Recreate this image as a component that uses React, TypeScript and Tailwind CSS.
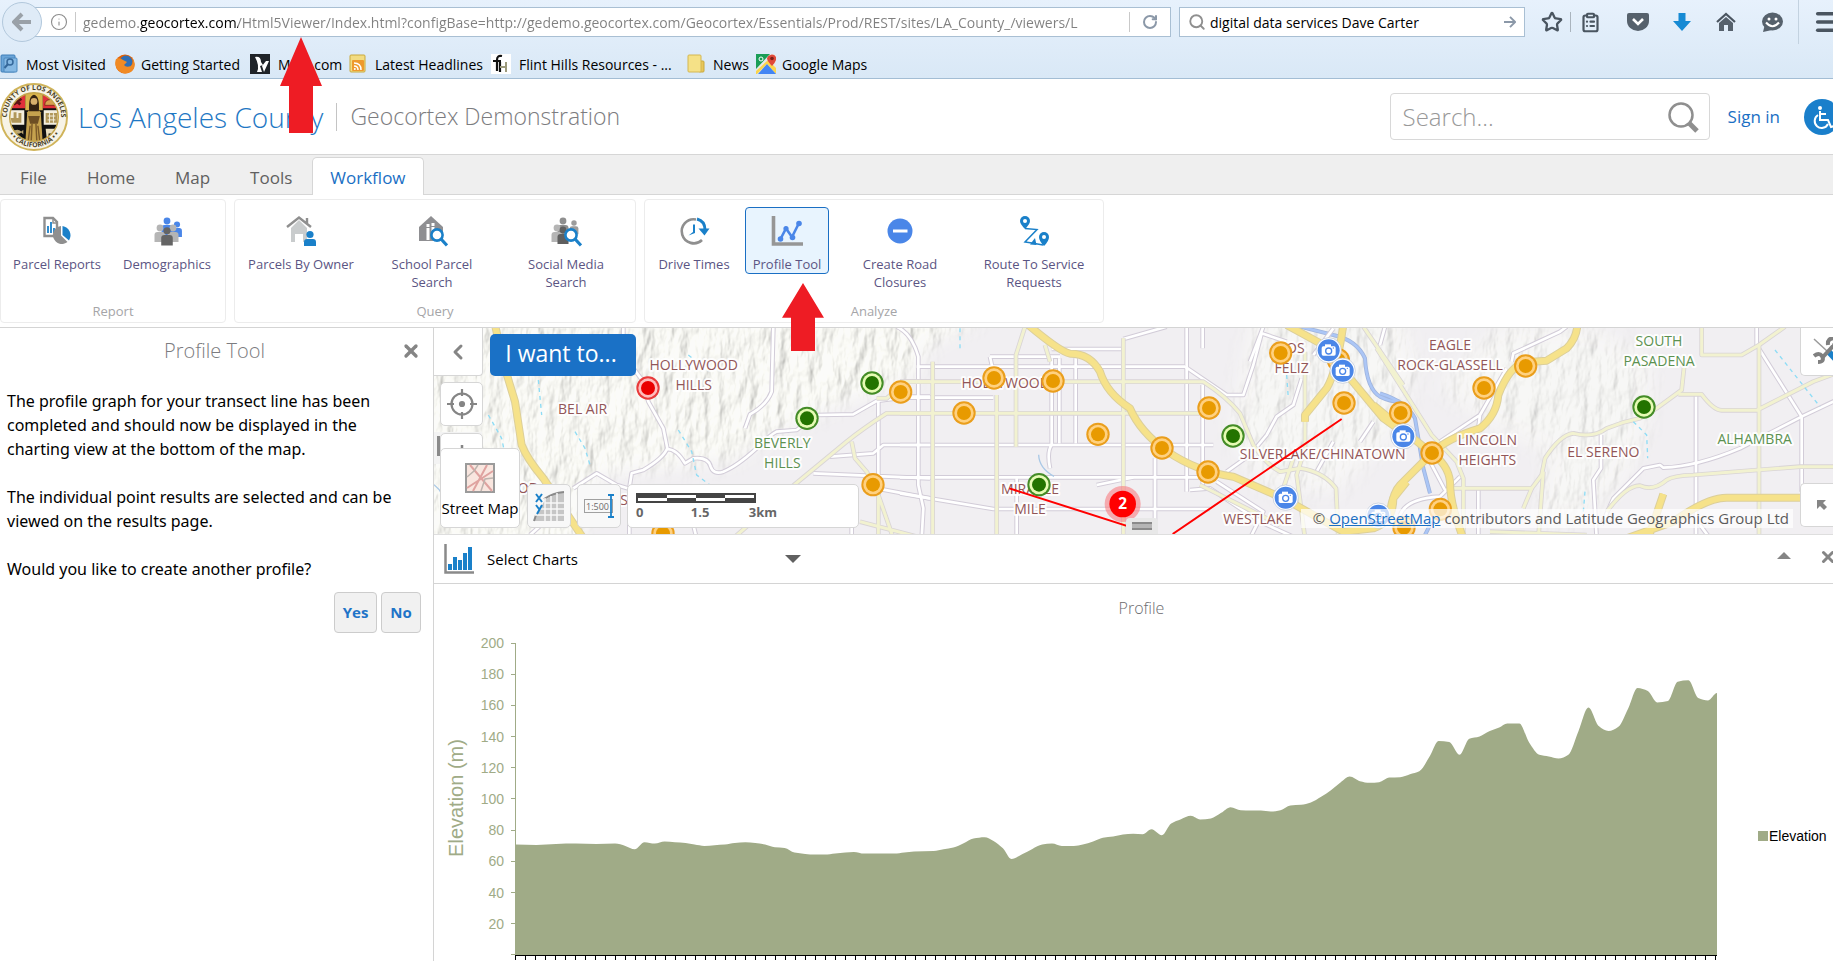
import { useState } from "react";
import type { ReactNode } from "react";
import clsx from "clsx";
import {
  ChevronLeft,
  ClipboardList,
  Info,
  Menu,
  RotateCw,
  Search,
  Star,
  X,
} from "lucide-react";

type Road = { tile: number; kind: "local" | "minor" | "major" | "river"; d: string };
type Pin = { tile: number; kind: "orange" | "green" | "red" | "camera"; x: number; y: number };
type MapLabel = { tile: number; x: number; y: number; text: string; city?: boolean };

const tileOffset = ["translate(-12 -9)", "translate(1398 -9)", "translate(2838 -9)"];

const roads: Road[] = [
  { tile: 1, kind: "river", d: "M1200 5 L1300 30 Q1370 45 1395 100 Q1400 190 1440 215 Q1470 230 1500 230" },
  { tile: 2, kind: "river", d: "M0 205 Q80 230 105 280 L130 430 L150 505 M155 590 L130 640" },
  { tile: 0, kind: "local", d: "M1030 5 L1025 200 Q1010 240 960 268 L945 310" },
  { tile: 0, kind: "local", d: "M580 5 V90 L640 170 L655 230 L700 310 L712 370 Q700 400 640 435 L605 445 L598 490 V640" },
  { tile: 0, kind: "local", d: "M710 372 Q740 372 765 415 L790 400 Q835 395 842 425 Q850 450 880 440 Q920 425 980 370 Q1020 330 1040 320 L1100 315 L1160 270 L1270 268 L1340 228 L1440 215 H1500" },
  { tile: 0, kind: "local", d: "M430 490 L500 445 L560 480 L600 492 H700 M300 630 L400 540 M790 600 L800 640" },
  { tile: 0, kind: "local", d: "M1345 225 V510 M1200 395 L1330 385 L1360 360 H1500 M1150 445 L1500 460 M1340 490 L1500 520 M1265 600 V640" },
  { tile: 0, kind: "local", d: "M1400 5 Q1445 25 1465 95 V480 L1480 550 L1475 640" },
  { tile: 1, kind: "local", d: "M50 125 H855 M455 72 H670 M270 95 H450 L480 95 M670 42 L800 5 M860 5 V500 M908 5 V70 M908 180 V480" },
  { tile: 1, kind: "local", d: "M0 360 H940 M0 457 H900 M0 505 L280 552 H930 M455 100 V360 Q440 380 450 430 M478 100 V355 M527 100 V355" },
  { tile: 1, kind: "local", d: "M765 400 V640 M350 460 V640 M0 218 H280 M270 95 L282 150 M590 480 L700 457" },
  { tile: 1, kind: "local", d: "M855 125 L980 210 H1030 L1060 120 L1085 25 L1160 50 M1090 5 L1050 110" },
  { tile: 1, kind: "local", d: "M1205 160 L1180 240 L1130 275 L1100 330 L1050 390 L980 440 M870 495 L930 490 L1080 590 L1190 640" },
  { tile: 1, kind: "local", d: "M1420 290 L1380 350 M1300 350 L1250 440 M950 470 L1090 560 L1050 640 M1300 10 L1240 90" },
  { tile: 2, kind: "local", d: "M15 5 L0 60 M395 110 L400 85 L540 20 L560 5 M180 350 L300 270 L380 130 M300 270 L295 310" },
  { tile: 2, kind: "local", d: "M663 330 V430 L640 465 L650 640 M1130 5 V60 L1265 275 V500 M948 210 V640" },
  { tile: 2, kind: "local", d: "M1380 220 L1265 275 L1080 370 Q950 425 850 428 L840 420 L790 430 L700 520 L665 600" },
  { tile: 2, kind: "local", d: "M295 490 V640 M150 410 L195 495 M60 570 Q80 520 180 515 L240 455 M960 600 L990 640" },
  { tile: 0, kind: "minor", d: "M1500 265 H1370 Q1300 310 1250 350 L1080 490 L910 640" },
  { tile: 0, kind: "minor", d: "M1265 350 L1275 400 L1310 440 L1345 510 L1390 640 M1290 590 L1480 640 M1345 510 V640" },
  { tile: 0, kind: "minor", d: "M1340 220 H1370 L1430 170 H1500" },
  { tile: 1, kind: "minor", d: "M0 170 H910 Q980 215 1020 265 L1060 360 Q1100 420 1140 440 L1200 430 Q1270 440 1308 490 L1315 640" },
  { tile: 1, kind: "minor", d: "M0 265 H910 M98 110 V640 M290 210 V640 M348 365 V90 L375 5 M670 40 V640 M435 60 L450 110" },
  { tile: 1, kind: "minor", d: "M1215 80 V370 L1190 450 L1215 640 M1180 400 L1150 490 M1390 5 L1510 180 M900 480 L1140 600" },
  { tile: 2, kind: "minor", d: "M-10 70 L130 290 L155 330 L230 410 L250 460 V640" },
  { tile: 2, kind: "minor", d: "M220 490 H455 L485 450 L495 400 Q540 330 580 325 Q640 340 680 310 Q730 290 780 280 L830 250 L905 195 L915 100" },
  { tile: 2, kind: "minor", d: "M490 440 L475 640 M455 490 L430 550 M965 5 V90 H1085 L1137 60 L1215 5" },
  { tile: 2, kind: "minor", d: "M895 208 H965 Q1000 255 1025 256 H1130 L1300 170 L1380 140 M1137 60 V640" },
  { tile: 2, kind: "minor", d: "M680 560 Q740 480 780 482 Q820 500 860 465 Q880 452 940 450 L1260 425 H1380 M330 620 L620 630" },
  { tile: 0, kind: "major", d: "M195 0 L225 130 L255 230 L275 360 Q290 400 340 460 L460 640" },
  { tile: 1, kind: "major", d: "M385 0 Q480 80 510 86 Q570 85 600 140 Q620 205 690 250 Q720 320 800 378 Q890 440 1000 455 L1150 520 L1330 620 L1420 610 Q1480 590 1480 520 L1520 470" },
  { tile: 1, kind: "major", d: "M1160 0 L1270 60 L1350 160 L1450 280 L1520 330 M1330 0 Q1310 140 1280 190 L1215 270 V290" },
  { tile: 2, kind: "major", d: "M-20 240 L100 340 L155 385 Q205 420 210 470 Q210 540 250 640" },
  { tile: 2, kind: "major", d: "M155 385 Q200 340 300 310 Q350 270 355 210 Q390 120 437 112 L500 107 L560 70 Q590 40 592 0" },
  { tile: 2, kind: "major", d: "M155 385 L60 480 Q40 500 30 560 M850 507 L805 640 M740 640 L880 590 Q980 518 1040 518 H1260" },
];

const roadStyle = {
  river: { casing: "#9fb4dd", width: 12, fill: "#abc6f6", inner: 7 },
  local: { casing: "#d2ccd8", width: 14, fill: "#ffffff", inner: 8 },
  minor: { casing: "#d9d4d6", width: 14, fill: "#f2f2d0", inner: 9 },
  major: { casing: "#dccf9a", width: 24, fill: "#f6e28a", inner: 18 },
};

const streams = [
  { tile: 0, d: "M325 165 L335 270 M175 270 L215 340 L240 460 M435 320 L465 370 L480 420 M745 315 L785 380 L800 450 L840 480 M775 90 L800 110" },
  { tile: 1, d: "M180 10 V70 M1160 150 L1165 220" },
  { tile: 2, d: "M760 290 L800 330 L803 400 M615 500 L610 560 M1185 75 L1320 245" },
];

const pins: Pin[] = [
  { tile: 0, kind: "red", x: 654, y: 189 },
  { tile: 0, kind: "green", x: 1326, y: 174 },
  { tile: 0, kind: "green", x: 1131, y: 280 },
  { tile: 0, kind: "orange", x: 1412, y: 201 },
  { tile: 0, kind: "orange", x: 1329, y: 479 },
  { tile: 0, kind: "orange", x: 699, y: 625 },
  { tile: 1, kind: "orange", x: 282, y: 159 },
  { tile: 1, kind: "orange", x: 459, y: 168 },
  { tile: 1, kind: "orange", x: 192, y: 264 },
  { tile: 1, kind: "orange", x: 594, y: 328 },
  { tile: 1, kind: "orange", x: 786, y: 369 },
  { tile: 1, kind: "orange", x: 927, y: 249 },
  { tile: 1, kind: "orange", x: 924, y: 441 },
  { tile: 1, kind: "orange", x: 1142, y: 84 },
  { tile: 1, kind: "orange", x: 1315, y: 105 },
  { tile: 1, kind: "orange", x: 1332, y: 234 },
  { tile: 1, kind: "green", x: 417, y: 479 },
  { tile: 1, kind: "green", x: 999, y: 333 },
  { tile: 1, kind: "camera", x: 1286, y: 76 },
  { tile: 1, kind: "camera", x: 1328, y: 137 },
  { tile: 1, kind: "camera", x: 1157, y: 518 },
  { tile: 1, kind: "camera", x: 1435, y: 572 },
  { tile: 2, kind: "orange", x: 62, y: 264 },
  { tile: 2, kind: "camera", x: 70, y: 334 },
  { tile: 2, kind: "orange", x: 156, y: 384 },
  { tile: 2, kind: "orange", x: 312, y: 189 },
  { tile: 2, kind: "orange", x: 437, y: 123 },
  { tile: 2, kind: "orange", x: 181, y: 553 },
  { tile: 2, kind: "orange", x: 72, y: 608 },
  { tile: 2, kind: "green", x: 792, y: 246 },
];

const pinColors = {
  orange: ["#ea9e1c", "#ffd180", "#e89a00"],
  green: ["#448c27", "#e6fbb4", "#237300"],
  red: ["#e83a3a", "#ffbcbc", "#ea0000"],
};

const mapLabels: MapLabel[] = [
  { tile: 0, x: 458, y: 267, text: "BEL AIR" },
  { tile: 0, x: 791, y: 136, text: "HOLLYWOOD" },
  { tile: 0, x: 791, y: 196, text: "HILLS" },
  { tile: 0, x: 1057, y: 369, text: "BEVERLY", city: true },
  { tile: 0, x: 1057, y: 429, text: "HILLS", city: true },
  { tile: 0, x: 295, y: 504, text: "OD" },
  { tile: 0, x: 582, y: 540, text: "S" },
  { tile: 1, x: 317, y: 190, text: "HOLLYWOOD" },
  { tile: 1, x: 1175, y: 84, text: "LOS" },
  { tile: 1, x: 1175, y: 144, text: "FELIZ" },
  { tile: 1, x: 1268, y: 402, text: "SILVERLAKE/CHINATOWN" },
  { tile: 1, x: 390, y: 507, text: "MIRACLE" },
  { tile: 1, x: 390, y: 567, text: "MILE" },
  { tile: 1, x: 1073, y: 597, text: "WESTLAKE" },
  { tile: 2, x: 210, y: 76, text: "EAGLE" },
  { tile: 2, x: 210, y: 136, text: "ROCK-GLASSELL" },
  { tile: 2, x: 322, y: 360, text: "LINCOLN" },
  { tile: 2, x: 322, y: 420, text: "HEIGHTS" },
  { tile: 2, x: 670, y: 395, text: "EL SERENO" },
  { tile: 2, x: 837, y: 62, text: "SOUTH", city: true },
  { tile: 2, x: 837, y: 122, text: "PASADENA", city: true },
  { tile: 2, x: 1124, y: 357, text: "ALHAMBRA", city: true },
];

// Samples along the transect: [distance, height above the axis], both in plot units
const profile: [number, number][] = [
  [0, 331], [46, 330], [90, 333], [134, 334], [180, 333], [222, 334], [245, 327], [266, 317],
  [288, 338], [311, 334], [333, 340], [356, 338], [380, 336], [400, 331], [422, 327], [445, 329],
  [468, 331], [490, 336], [514, 338], [536, 336], [558, 331], [580, 323], [602, 321], [624, 307],
  [648, 303], [670, 301], [692, 301], [715, 304], [738, 307], [757, 309], [780, 304], [848, 304],
  [870, 307], [892, 310], [936, 312], [958, 317], [980, 322], [1003, 335], [1025, 349], [1050, 353],
  [1070, 342], [1091, 320], [1110, 288], [1134, 302], [1157, 318], [1179, 331], [1201, 334],
  [1223, 327], [1250, 327], [1270, 331], [1293, 340], [1315, 351], [1338, 355], [1360, 361],
  [1383, 363], [1404, 362], [1424, 377], [1447, 359], [1468, 394], [1490, 407], [1512, 417],
  [1533, 406], [1557, 409], [1580, 426], [1601, 443], [1624, 434], [1647, 433], [1669, 433],
  [1691, 430], [1713, 434], [1735, 448], [1759, 450], [1781, 457], [1804, 474], [1826, 494],
  [1848, 518], [1868, 535], [1891, 521], [1913, 516], [1934, 518], [1957, 532], [1981, 533],
  [2003, 542], [2024, 551], [2048, 597], [2067, 641], [2091, 638], [2114, 600], [2136, 648],
  [2159, 655], [2182, 671], [2203, 682], [2221, 694], [2248, 694], [2270, 637], [2293, 600],
  [2314, 595], [2336, 589], [2358, 600], [2381, 672], [2403, 742], [2426, 686], [2448, 671],
  [2470, 684], [2492, 739], [2513, 800], [2536, 791], [2557, 757], [2581, 761], [2603, 819],
  [2627, 823], [2649, 770], [2671, 763], [2691, 785],
];

const PLOT_W = 2691;
const PLOT_H = 935;

// Monotone-style smoothing so that peaks do not overshoot the samples
const areaPath = () => {
  const slope = profile.map((p, i) => {
    const prev = profile[i - 1];
    const next = profile[i + 1];
    if (!prev || !next) return 0;
    const a = (p[1] - prev[1]) / (p[0] - prev[0]);
    const b = (next[1] - p[1]) / (next[0] - p[0]);
    return a * b <= 0 ? 0 : (2 * a * b) / (a + b);
  });
  let d = `M0 ${PLOT_H} L0 ${PLOT_H - profile[0][1]}`;
  for (let i = 1; i < profile.length; i++) {
    const [x0, y0] = profile[i - 1];
    const [x1, y1] = profile[i];
    const h = (x1 - x0) / 3;
    d += ` C${x0 + h} ${PLOT_H - y0 - slope[i - 1] * h} ${x1 - h} ${PLOT_H - y1 + slope[i] * h} ${x1} ${PLOT_H - y1}`;
  }
  return `${d} L${PLOT_W} ${PLOT_H} Z`;
};

const Person = ({ x, y, s = 1, color }: { x: number; y: number; s?: number; color: string }) => (
  <g transform={`translate(${x} ${y}) scale(${s})`} fill={color}>
    <circle cx="0" cy="-5" r="3.4" />
    <path d="M-5.5 9V2Q-5.5-1 -2.5-1H2.5Q5.5-1 5.5 2V9Z" />
  </g>
);

const Magnifier = () => (
  <g fill="none" stroke="#1a80c9" strokeWidth="2.6">
    <circle cx="21" cy="20" r="5.6" fill="#fff" />
    <path d="M25 24L31 30.500" strokeWidth="3.200" />
  </g>
);

const RibbonIcon = ({ children }: { children: ReactNode }) => (
  <svg viewBox="0 0 32 32" className="h-8 w-8" aria-hidden="true">
    {children}
  </svg>
);

const icons: Record<string, ReactNode> = {
  report: (
    <RibbonIcon>
      <path d="M3.500 3H12L16 7V21H3.500Z" fill="#fff" stroke="#8f8f8f" strokeWidth="2.4" />
      <path d="M12 3V8H16" fill="none" stroke="#8f8f8f" strokeWidth="1.500" />
      <path d="M7 18V11M10 18V7M13 18V13" stroke="#1a80c9" strokeWidth="1.800" />
      <path d="M20 11A9 9 0 1 0 26.500 27L20 20.500Z" fill="#8f8f8f" />
      <path d="M21.500 11A9.500 9.500 0 0 1 28 25.500L21.500 20Z" fill="#1a80c9" />
    </RibbonIcon>
  ),
  people: (
    <RibbonIcon>
      <Person x={16} y={11} color="#4a86e8" />
      <Person x={26} y={14} s={0.9} color="#4a86e8" />
      <Person x={9} y={18} color="#b5b5b5" />
      <Person x={22} y={18} color="#b5b5b5" />
      <Person x={16} y={21} s={1.05} color="#646464" />
    </RibbonIcon>
  ),
  house: (
    <RibbonIcon>
      <path d="M6 13L14 5L22 13V27H18V19H10V27H6Z" fill="#c9cccd" />
      <path d="M2 12L14 2.500L26 12M22 3V8" fill="none" stroke="#8f8f8f" strokeWidth="2.400" />
      <circle cx="25" cy="19.500" r="3.600" fill="#1a80c9" />
      <path d="M19 31V27Q19 24 22 24H28Q31 24 31 27V31H28V28V31H22V28V31Z" fill="#1a80c9" />
    </RibbonIcon>
  ),
  school: (
    <RibbonIcon>
      <path d="M3 12L15 1L27 12V26H3Z" fill="#8f8f92" />
      <path d="M12 9V25M17 8V18" stroke="#fff" strokeWidth="3" strokeDasharray="3 1 12 2" />
      <Magnifier />
    </RibbonIcon>
  ),
  social: (
    <RibbonIcon>
      <Person x={13} y={11} color="#8f8f8f" />
      <Person x={24} y={12} s={0.8} color="#9c9c9c" />
      <Person x={7} y={18} color="#b5b5b5" />
      <Person x={13} y={20} color="#5f5f5f" />
      <Magnifier />
    </RibbonIcon>
  ),
  clock: (
    <RibbonIcon>
      <path d="M24 25A12 12 0 1 1 18 4.500" fill="none" stroke="#8f8f8f" strokeWidth="2.600" />
      <path d="M15 9.500V17L10.500 20.500L17 18V9.500Z" fill="#1a80c9" />
      <path d="M19 4Q27 6 27 15" fill="none" stroke="#1a80c9" strokeWidth="3" />
      <path d="M20.500 13.500H31.500L26.500 20.500Z" fill="#1a80c9" />
    </RibbonIcon>
  ),
  graph: (
    <RibbonIcon>
      <path d="M2.500 1V29H32" fill="none" stroke="#969696" strokeWidth="3.600" />
      <path d="M10 23L15 13.500L21 22L27.500 9" fill="none" stroke="#4a86e8" strokeWidth="2.600" />
      <g fill="#4a86e8">
        <circle cx="9.500" cy="24" r="2.800" />
        <circle cx="15" cy="13.500" r="2.600" />
        <circle cx="21.500" cy="22.500" r="2.800" />
        <circle cx="28" cy="8.500" r="2.800" />
      </g>
    </RibbonIcon>
  ),
  minus: (
    <RibbonIcon>
      <circle cx="16" cy="16" r="12.500" fill="#4a86e8" />
      <path d="M9 16H23.500" stroke="#fff" strokeWidth="3" />
    </RibbonIcon>
  ),
  route: (
    <RibbonIcon>
      <g fill="#1a80c9">
        <path d="M7 14Q2 9 2 6A5 5 0 0 1 12 6Q12 9 7 14Z" />
        <path d="M26 31Q21 26 21 22A5 5 0 0 1 31 22Q31 26 26 31Z" />
        <path d="M12 29.500L17 23L18.500 30Z" />
      </g>
      <circle cx="7" cy="6" r="2" fill="#fff" />
      <circle cx="26" cy="22" r="2" fill="#fff" />
      <path d="M7 13.500L19 14.500L7 27L14 28L25 30" fill="none" stroke="#1a80c9" strokeWidth="1.500" />
    </RibbonIcon>
  ),
};

type Tool = { label: string; icon: string; width: string };

const ribbonGroups: { name: string; tools: Tool[] }[] = [
  {
    name: "Report",
    tools: [
      { label: "Parcel Reports", icon: "report", width: "w-25" },
      { label: "Demographics", icon: "people", width: "w-26" },
    ],
  },
  {
    name: "Query",
    tools: [
      { label: "Parcels By Owner", icon: "house", width: "w-30" },
      { label: "School Parcel Search", icon: "school", width: "w-[126px] px-3" },
      { label: "Social Media Search", icon: "social", width: "w-[126px] px-4" },
    ],
  },
  {
    name: "Analyze",
    tools: [
      { label: "Drive Times", icon: "clock", width: "w-[86px]" },
      { label: "Profile Tool", icon: "graph", width: "w-21" },
      { label: "Create Road Closures", icon: "minus", width: "w-[126px] px-4" },
      { label: "Route To Service Requests", icon: "route", width: "w-[126px] px-2" },
    ],
  },
];

const RedArrow = ({ className }: { className: string }) => (
  <svg viewBox="0 0 42 96" preserveAspectRatio="none" className={clsx("pointer-events-none absolute z-20 w-[42px]", className)} aria-hidden="true">
    <path d="M21 0L42 49H33V96H9V49H0Z" fill="#ee1c24" />
  </svg>
);

const BrowserChrome = () => (
  <header className="border-b border-[#a3bdd4] bg-linear-to-b from-[#e7f1fc] to-[#d9e8f6] text-[14px] text-black">
    <div className="flex h-11 items-center">
      <button aria-label="Back" className="z-10 ml-[2px] flex size-10 shrink-0 items-center justify-center rounded-full border border-[#b2c8dc] bg-[#dfebf7]">
        <svg viewBox="0 0 20 20" className="size-5" aria-hidden="true">
          <path d="M10 2L2 10L10 18M3 10H19" fill="none" stroke="#9aa1a8" strokeWidth="4" />
        </svg>
      </button>
      <div className="-ml-5 flex h-[30px] min-w-0 flex-1 items-center border border-[#a9bfd3] bg-white pl-[27px]">
        <Info className="size-[18px] shrink-0 text-[#8d8d8d]" strokeWidth={1.5} />
        <span className="mx-[7px] h-5 w-px bg-[#c9c9c9]" />
        <input
          aria-label="Address"
          readOnly
          value="gedemo.geocortex.com/Html5Viewer/Index.html?configBase=http://gedemo.geocortex.com/Geocortex/Essentials/Prod/REST/sites/LA_County_/viewers/L"
          className="mr-8 min-w-0 flex-1 bg-[linear-gradient(to_right,#808080_57px,#000_57px,#000_155px,#808080_155px)] bg-clip-text text-transparent outline-none"
        />
        <span className="h-5 w-px bg-[#c9c9c9]" />
        <button aria-label="Reload" className="flex w-10 justify-center text-[#8b98a8]">
          <RotateCw className="size-4" strokeWidth={3} />
        </button>
      </div>
      <div className="ml-2 flex h-[30px] w-[346px] shrink-0 items-center border border-[#a9bfd3] bg-white px-2">
        <Search className="size-[18px] shrink-0 text-[#8f8f8f]" strokeWidth={2.5} />
        <input aria-label="Web search" defaultValue="digital data services Dave Carter" className="ml-1 min-w-0 flex-1 outline-none" />
        <svg viewBox="0 0 14 14" className="size-3" aria-hidden="true">
          <path d="M0 7H12M7 1L13 7L7 13" fill="none" stroke="#8b98a8" strokeWidth="2.200" />
        </svg>
      </div>
      <div className="flex h-full shrink-0 items-center text-[#4a5560]">
        <button aria-label="Bookmark" className="ml-4">
          <Star className="size-[22px]" strokeWidth={2.5} />
        </button>
        <span className="mx-[7px] h-5 w-px bg-[#aab4be]" />
        <button aria-label="Bookmarks list" className="flex w-6 justify-center">
          <ClipboardList className="size-[21px]" strokeWidth={2.5} />
        </button>
        <button aria-label="Pocket" className="ml-6 flex w-6 justify-center">
          <svg viewBox="0 0 22 20" className="h-5 w-[22px]" aria-hidden="true">
            <path d="M2 1H20Q22 1 22 3V9A11 10 0 0 1 0 9V3Q0 1 2 1Z" fill="#56616c" />
            <path d="M6 7L11 12L16 7" fill="none" stroke="#fff" strokeWidth="2.600" />
          </svg>
        </button>
        <button aria-label="Downloads" className="ml-5 flex w-6 justify-center">
          <svg viewBox="0 0 18 18" className="size-[18px]" aria-hidden="true">
            <path d="M5.500 0H12.500V8H18L9 18L0 8H5.500Z" fill="#168ad4" />
          </svg>
        </button>
        <button aria-label="Home" className="ml-5 flex w-6 justify-center">
          <svg viewBox="0 0 20 20" className="size-5" aria-hidden="true">
            <path d="M1 10L10 2L19 10" fill="none" stroke="#4a5560" strokeWidth="2.200" />
            <path d="M10 5L17 11V19H12V13H8V19H3V11Z" fill="#56616c" />
          </svg>
        </button>
        <button aria-label="Feedback" className="ml-[22px] flex w-6 justify-center">
          <svg viewBox="0 0 22 20" className="h-5 w-[22px]" aria-hidden="true">
            <ellipse cx="11.500" cy="9.500" rx="10.500" ry="9" fill="#56616c" />
            <path d="M2 20L4 12L11 18Z" fill="#56616c" />
            <circle cx="8" cy="7" r="1.500" fill="#fff" />
            <circle cx="15" cy="7" r="1.500" fill="#fff" />
            <path d="M5 10.500Q11.500 18 18 10.500" fill="none" stroke="#fff" strokeWidth="2" />
          </svg>
        </button>
        <span className="ml-[14px] h-full w-px bg-[#c3d2e0]" />
        <button aria-label="Menu" className="-mr-2 ml-[14px]">
          <Menu className="size-7" strokeWidth={3} />
        </button>
      </div>
    </div>
    <nav className="flex h-[34px] items-center pt-[6px] whitespace-nowrap">
      <a href="#most" className="flex w-[115px] items-center gap-2">
        <svg viewBox="0 0 18 20" className="h-5 w-[18px]" aria-hidden="true">
          <rect x="1" y="1" width="14" height="17" rx="1" fill="#6ba5d8" stroke="#3f7fb8" />
          <rect x="4" y="4" width="13" height="14" rx="1" fill="#86b9e4" stroke="#4c89bf" />
          <circle cx="10" cy="8" r="3" fill="none" stroke="#35689b" strokeWidth="1.500" />
          <path d="M8 10L4.500 14" stroke="#35689b" strokeWidth="2" />
        </svg>
        Most Visited
      </a>
      <a href="#start" className="flex w-[135px] items-center gap-[6px]">
        <svg viewBox="0 0 20 20" className="size-5" aria-hidden="true">
          <circle cx="10" cy="10" r="9.500" fill="#e66000" />
          <circle cx="11" cy="8" r="6.500" fill="#2f6fb5" />
          <path d="M1 5Q5 3 8 6L12 8L9 11Q11 14 16 12Q19 9 17 3Q23 12 16 18Q8 22 2 15Q-1 10 1 5Z" fill="#f08a24" />
        </svg>
        Getting Started
      </a>
      <a href="#site" className="flex w-[99px] items-center gap-2">
        <svg viewBox="0 0 20 20" className="size-5" aria-hidden="true">
          <rect width="20" height="20" fill="#1f2328" />
          <path d="M5 3Q11 2 11 8L13 11L10 12L12 18H7Q10 12 5 3ZM14 18L12 12L16 7H19Z" fill="#fff" />
        </svg>
        Mani.com
      </a>
      <a href="#headlines" className="flex w-[142px] items-center gap-2">
        <svg viewBox="0 0 18 20" className="h-5 w-[18px]" aria-hidden="true">
          <rect x="1" y="1" width="15" height="17" rx="1" fill="#f2dc82" stroke="#c9a93c" />
          <rect x="3" y="6" width="12" height="11" rx="1" fill="#ee9a2d" />
          <path d="M5 9Q12 9 12 16M5 12Q9 12 9 16" fill="none" stroke="#fff" strokeWidth="1.500" />
          <circle cx="5.800" cy="15" r="1" fill="#fff" />
        </svg>
        Latest Headlines
      </a>
      <a href="#flint" className="flex w-[196px] items-center gap-2">
        <svg viewBox="0 0 20 20" className="size-5" aria-hidden="true">
          <rect width="20" height="20" fill="#fff" />
          <path d="M11 2Q6 1 6 6V17M2 7H10M9 8V18" fill="none" stroke="#111" strokeWidth="2.200" />
          <path d="M15 8V18M9 13H15" fill="none" stroke="#9c9a7c" strokeWidth="2" />
        </svg>
        Flint Hills Resources - ...
      </a>
      <a href="#news" className="flex w-[69px] items-center gap-2">
        <svg viewBox="0 0 18 20" className="h-5 w-[18px]" aria-hidden="true">
          <rect x="12" y="7" width="5" height="11" rx="1" fill="#e8c65a" stroke="#c9a93c" />
          <rect x="1" y="1" width="13" height="17" rx="1" fill="#f5e187" stroke="#d4b751" />
        </svg>
        News
      </a>
      <a href="#maps" className="flex items-center gap-[6px]">
        <svg viewBox="0 0 20 20" className="size-5" aria-hidden="true">
          <rect width="20" height="20" rx="1" fill="#e8e8e8" />
          <path d="M0 0H14L0 15Z" fill="#1b9e57" />
          <path d="M0 17L12 6L20 14V20L11 10L1 20H0Z" fill="#fbd54b" />
          <path d="M11 10L20 20H2Z" fill="#4285f4" />
          <path d="M16 12Q11 7 11 4A5 5 0 0 1 20 3V6Q19 9 16 12Z" fill="#e04a3a" />
          <circle cx="16" cy="4.500" r="1.800" fill="#7c1f17" />
          <circle cx="5" cy="5" r="2" fill="none" stroke="#fff" />
        </svg>
        Google Maps
      </a>
    </nav>
  </header>
);

const CountySeal = () => (
  <svg viewBox="0 0 70 70" className="size-[68px] shrink-0" aria-hidden="true">
    <defs>
      <path id="sealTop" d="M7 35A28 28 0 0 1 63 35" />
      <path id="sealBottom" d="M4 35A31 31 0 0 0 66 35" />
      <clipPath id="sealInner">
        <circle cx="35" cy="35" r="25" />
      </clipPath>
    </defs>
    <circle cx="35" cy="35" r="34" fill="#f7f3e6" stroke="#d0b45a" strokeWidth="2" />
    <g clipPath="url(#sealInner)">
      <rect width="70" height="70" fill="#111" />
      <rect x="8" y="8" width="18" height="18" fill="#e0303a" />
      <rect x="44" y="8" width="18" height="18" fill="#e0303a" />
      <rect x="8" y="28" width="17" height="15" fill="#f4efdf" />
      <rect x="45" y="28" width="17" height="15" fill="#f4efdf" />
      <path d="M12 41L11 36H14V30H17V36H19V31H22V41ZM47 41V31H59V41Z" fill="#b0975a" />
      <path d="M49 34H57M49 38H57M51 31V41M55 31V41" stroke="#f4efdf" />
      <path d="M14 22L22 16M15 17L21 22" stroke="#5c1414" strokeWidth="3" />
      <path d="M46 23Q46 17 52 17Q58 17 58 23Z" fill="#d7a050" stroke="#8c2a20" />
      <path d="M13 50Q18 46 22 50L24 48V53L22 51Q18 54 13 50Z" fill="#bda873" />
      <path d="M47 47H58L57 55H55V52H50V56H48Z" fill="#e9dfc0" />
      <path d="M26 8H44V28H26Z" fill="#d9b44c" />
      <path d="M26 63L28 30Q35 22 42 30L44 63Z" fill="#c5a24e" />
      <path d="M30 29Q29 13 35 12Q41 13 40 29Z" fill="#352312" />
      <circle cx="35" cy="19" r="3.500" fill="#d8b06c" />
      <path d="M29 34H41L39 42H31Z" fill="#6d4f24" />
      <path d="M32 62L33 42M38 62L37 42M29 60L31 44M41 60L39 44" stroke="#7b5a28" strokeWidth="1.500" />
    </g>
    <circle cx="35" cy="35" r="25" fill="none" stroke="#c4a54a" strokeWidth="1.500" />
    <g fontSize="7" fontWeight="700" fill="#4a4126" textAnchor="middle">
      <text>
        <textPath href="#sealTop" startOffset="50%">COUNTY OF LOS ANGELES</textPath>
      </text>
      <text>
        <textPath href="#sealBottom" startOffset="50%">•  •  CALIFORNIA  •  •</textPath>
      </text>
    </g>
  </svg>
);

const AppHeader = () => (
  <div className="flex h-[75px] items-center bg-white">
    <CountySeal />
    <h1 className="ml-[10px] text-[28px] font-light whitespace-nowrap text-[#1f78c4]">Los Angeles County</h1>
    <span className="mx-[13px] h-7 w-px bg-[#c4c4c4]" />
    <span className="text-[23px] font-light whitespace-nowrap text-[#7c7c80]">Geocortex Demonstration</span>
    <div className="mr-[18px] ml-auto flex h-[47px] w-[320px] items-center rounded-[4px] border border-[#d8d8d8] pr-[10px] pl-3">
      <input aria-label="Search" placeholder="Search..." className="min-w-0 flex-1 text-[24px] font-light outline-none placeholder:text-[#999]" />
      <svg viewBox="0 0 32 32" className="size-8" aria-hidden="true">
        <circle cx="14" cy="14" r="11.500" fill="none" stroke="#8f8f8f" strokeWidth="2.500" />
        <path d="M22 22L30 30" stroke="#8f8f8f" strokeWidth="5" />
      </svg>
    </div>
    <a href="#signin" className="text-[17px] whitespace-nowrap text-[#1a6fc4]">Sign in</a>
    <button aria-label="Accessibility" className="-mr-[7px] ml-6 size-9 shrink-0 rounded-full bg-[#1a7fcb]">
      <svg viewBox="0 0 36 36" className="size-9" fill="none" stroke="#fff" strokeWidth="2" aria-hidden="true">
        <circle cx="16" cy="9" r="2" fill="#fff" stroke="none" />
        <path d="M16 12V21H24L27 28L30 27M16 15H22" />
        <path d="M14 16A7 7 0 1 0 24 25" />
      </svg>
    </button>
  </div>
);

const Ribbon = () => {
  const [tab, setTab] = useState("Workflow");
  return (
    <>
      <div role="tablist" className="flex h-[41px] items-end border-y border-[#d6d6d6] bg-[#efefef] text-[17px]">
        {["File", "Home", "Map", "Tools", "Workflow"].map((name) => (
          <button
            key={name}
            role="tab"
            aria-selected={tab === name}
            onClick={() => setTab(name)}
            className={clsx(
              "rounded-t-[5px] border-x border-t pt-[3px]",
              name === "Workflow" ? "px-[17px]" : "px-[19px]",
              tab === name ? "-mb-px h-[38px] border-[#d6d6d6] bg-white text-[#1a6fc4]" : "h-9 border-transparent text-[#606060]",
            )}
          >
            {name}
          </button>
        ))}
      </div>
      <div className="flex gap-2 pt-1 pb-1">
        {ribbonGroups.map((group) => (
          <section key={group.name} className="flex h-[124px] flex-col justify-between rounded-[4px] border border-[#ececec] bg-white px-[6px] pt-[7px] pb-[2px]">
            <div className="flex items-start gap-2">
              {group.tools.map((tool) => (
                <button
                  key={tool.label}
                  className={clsx(
                    "flex shrink-0 flex-col items-center gap-2 rounded-[4px] border pt-[7px] text-[13px] leading-[18px] text-[#5b5583]",
                    tool.width,
                    tool.label === "Profile Tool" ? "h-[67px] border-[#1a6fc4] bg-[#e8f4fe]" : "border-transparent",
                  )}
                >
                  {icons[tool.icon]}
                  <span>{tool.label}</span>
                </button>
              ))}
            </div>
            <p className="text-center text-[13px] leading-[18px] text-[#a5a5a8]">{group.name}</p>
          </section>
        ))}
      </div>
    </>
  );
};

const ProfilePanel = () => (
  <aside className="w-[434px] shrink-0 border-r border-[#d4d4d4] bg-white">
    <div className="flex h-[46px] items-center">
      <h2 className="flex-1 pl-7 text-center text-[20px] font-light text-[#7c7c80]">Profile Tool</h2>
      <button aria-label="Close panel" className="mr-3 text-[#858585]">
        <X className="size-5" strokeWidth={4} />
      </button>
    </div>
    <div className="px-[7px] pt-[15px] font-['Noto_Sans',sans-serif] text-[16px] leading-6 text-black">
      <p className="w-[405px]">
        The profile graph for your transect line has been completed and should now be displayed in the charting view at
        the bottom of the map.
      </p>
      <p className="mt-6 w-[405px]">The individual point results are selected and can be viewed on the results page.</p>
      <p className="mt-6">Would you like to create another profile?</p>
    </div>
    <div className="mt-[11px] flex justify-end gap-1 pr-3 text-[15px] font-bold text-[#1f74c8]">
      <button className="h-[41px] w-[43px] rounded-[4px] border border-[#cccccc] bg-[#f1f1f1]">Yes</button>
      <button className="h-[41px] w-10 rounded-[4px] border border-[#cccccc] bg-[#f1f1f1]">No</button>
    </div>
  </aside>
);

const MapPin = ({ pin }: { pin: Pin }) => {
  if (pin.kind === "camera") {
    return (
      <g transform={`translate(${pin.x} ${pin.y})`}>
        <circle r="38" fill="#fff" stroke="#b9c4d6" strokeWidth="2" />
        <circle r="33" fill="#4a86e8" />
        <rect x="-21" y="-12" width="42" height="28" rx="5" fill="#fff" />
        <rect x="-11" y="-18" width="18" height="9" fill="#fff" />
        <circle cy="2" r="9" fill="#fff" stroke="#4a86e8" strokeWidth="4" />
        <circle cx="14" cy="-7" r="2" fill="#4a86e8" />
      </g>
    );
  }
  const [outer, ring, core] = pinColors[pin.kind];
  return (
    <g transform={`translate(${pin.x} ${pin.y})`}>
      <circle r="35" fill={outer} />
      <circle r="29" fill={ring} />
      <circle r="21" fill={core} />
    </g>
  );
};

const MapCanvas = () => (
  <svg viewBox="0 0 4197 618" preserveAspectRatio="xMinYMin slice" className="absolute inset-0 h-full w-full" role="img" aria-label="Street map of Los Angeles">
    <defs>
      <filter id="relief" x="0" y="0" width="100%" height="100%">
        <feTurbulence type="fractalNoise" baseFrequency="0.022 0.009" numOctaves="4" seed="7" />
        <feDiffuseLighting surfaceScale="13" lightingColor="#fdfdf8" diffuseConstant="1.15">
          <feDistantLight azimuth="220" elevation="58" />
        </feDiffuseLighting>
      </filter>
      <filter id="soften">
        <feGaussianBlur stdDeviation="28" />
      </filter>
      <mask id="hills">
        <g fill="#fff" filter="url(#soften)">
          <path d="M-60 -60H1700L1480 60L1440 150L1220 230L1000 330L900 400L700 420L500 440L420 680H-60Z" />
        </g>
        <g fill="#999" filter="url(#soften)">
          <path d="M2460 -60H2900L2960 120L2880 330L2700 500L2480 480L2380 320Z" />
          <path d="M3000 180L3200 -20L3500 0L3660 100L3640 320L3560 480L3400 600L3300 560L3340 380L3180 300Z" />
        </g>
      </mask>
    </defs>
    <rect width="4197" height="618" fill="#f1eff2" />
    <g mask="url(#hills)">
      <rect width="4197" height="618" filter="url(#relief)" />
      <rect width="4197" height="618" fill="#f6f5f0" opacity="0.4" />
    </g>
    <g fill="none" strokeLinejoin="round" strokeLinecap="butt">
      {(["river", "local", "minor", "major"] as const).map((kind) =>
        (["casing", "fill"] as const).map((layer) => (
          <g key={kind + layer} stroke={roadStyle[kind][layer]} strokeWidth={layer === "casing" ? roadStyle[kind].width : roadStyle[kind].inner}>
            {roads
              .filter((road) => road.kind === kind)
              .map((road) => (
                <path key={road.d} d={road.d} transform={tileOffset[road.tile]} />
              ))}
          </g>
        )),
      )}
      {streams.map((stream) => (
        <path key={stream.d} d={stream.d} transform={tileOffset[stream.tile]} stroke="#8edcf5" strokeWidth="4" strokeDasharray="12 12" />
      ))}
      <path d="M1814 380Q1815 420 1860 445M0 470Q40 500 30 560" stroke="#a9c8e6" strokeWidth="4" />
    </g>
    <g fontSize="42" textAnchor="middle" stroke="#fff" strokeOpacity="0.9" strokeWidth="12" strokeLinejoin="round" paintOrder="stroke">
      {mapLabels.map((label) => (
        <text key={`${label.tile}-${label.x}-${label.y}`} x={label.x} y={label.y} fill={label.city ? "#5c9150" : "#925658"} transform={tileOffset[label.tile]}>
          {label.text}
        </text>
      ))}
    </g>
    {pins.map((pin) => (
      <g key={`${pin.tile}-${pin.x}-${pin.y}`} transform={tileOffset[pin.tile]}>
        <MapPin pin={pin} />
      </g>
    ))}
    <g transform={tileOffset[1]}>
      <circle cx="668" cy="537" r="54" fill="#f87c80" opacity="0.600" />
      <circle cx="668" cy="537" r="40" fill="#ff0000" />
      <text x="668" y="553" fontSize="46" fontWeight="700" textAnchor="middle" fill="#fff">
        2
      </text>
      <path d="M328 490L760 628M818 627L1325 282" fill="none" stroke="#ff0000" strokeWidth="6" />
    </g>
  </svg>
);

const mapButton = "absolute flex items-center justify-center rounded-[5px] border border-[#d6d6d6]";

const MapView = () => (
  <div className="relative h-[207px] overflow-hidden border-b border-[#dedede]">
    <MapCanvas />
    <button aria-label="Collapse panel" className="absolute top-0 left-0 flex h-12 w-[49px] items-center justify-center rounded-br-[4px] border-r border-b border-[#d6d6d6] bg-white text-[#858585]">
      <ChevronLeft className="size-6" strokeWidth={3} />
    </button>
    <button className="absolute top-[6px] left-14 h-[42px] w-[146px] rounded-[5px] bg-[#1a71c6] pr-1 pb-1 text-[23px] leading-none text-white">
      I want to...
    </button>
    <button aria-label="Find my location" className={clsx(mapButton, "top-[54px] left-[6px] h-11 w-[43px] bg-white")}>
      <svg viewBox="0 0 32 32" className="size-8" fill="none" stroke="#858585" strokeWidth="2.200" aria-hidden="true">
        <circle cx="16" cy="16" r="10.500" />
        <circle cx="16" cy="16" r="2" fill="#858585" />
        <path d="M16 1V8M16 24V31M1 16H8M24 16H31" />
      </svg>
    </button>
    <div className="absolute top-[104px] left-0 h-8 w-12 bg-[#f3f3f3]">
      <span className="mt-1 ml-[3px] block h-5 w-[3px] bg-[#8a8a8a]" />
    </div>
    <button aria-label="Zoom in" className={clsx(mapButton, "top-[105px] left-[6px] h-11 w-[43px] bg-white")}>
      <svg viewBox="0 0 24 24" className="size-6" stroke="#858585" strokeWidth="2.500" aria-hidden="true">
        <path d="M12 2V22M2 12H22" />
      </svg>
    </button>
    <button className="absolute top-[120px] left-[6px] flex h-20 w-20 flex-col items-center rounded-[5px] border border-[#d6d6d6] bg-white pt-[14px] text-[15px] whitespace-nowrap text-black">
      <svg viewBox="0 0 30 30" className="size-[30px]" aria-hidden="true">
        <rect x="1" y="1" width="28" height="28" fill="#f9e6df" stroke="#9b9b9b" strokeWidth="2" />
        <path d="M2 25L28 8M5 2L27 28M22 2L8 28" stroke="#dfa3a0" strokeWidth="2" />
        <path d="M2 14L9 8L13 2M16 28L20 16L28 15" fill="none" stroke="#bdb4ae" strokeWidth="1.500" />
      </svg>
      <span className="mt-1">Street Map</span>
    </button>
    <div className="absolute top-[156px] left-[93px] flex gap-[6px]">
      <button aria-label="Coordinates" className="flex h-11 w-11 items-center justify-center rounded-[5px] border border-[#d6d6d6] bg-[#f8f8f8]">
        <svg viewBox="0 0 32 32" className="size-8" aria-hidden="true">
          <path d="M1 31Q2 26 5 22L12 10Q20 4 31 2V31Z" fill="#c6c6c6" />
          <path d="M11 9Q20 3 31 2M1 31L3 25" fill="none" stroke="#8a8a8a" strokeWidth="2" />
          <path d="M12 8V31M18 6V31M24 3V31M12 13H31M5 19H31M2 25H31" stroke="#f8f8f8" strokeWidth="1.500" />
          <path d="M3 4L9 12M9 4L3 12M3 15L6 19M9 15L4 24" fill="none" stroke="#1a80c9" strokeWidth="2" />
        </svg>
      </button>
      <button aria-label="Set scale" className="flex h-11 w-11 items-center justify-center rounded-[5px] border border-[#d6d6d6] bg-[#f8f8f8]">
        <svg viewBox="0 0 32 32" className="size-8" aria-hidden="true">
          <rect x="1.500" y="9.500" width="28" height="13" fill="#f8f8f8" stroke="#a0a0a0" />
          <text x="3" y="20" fontSize="9" fill="#6c6c6c">1:500</text>
          <path d="M25 5H31M28 5V27M25 27H31" fill="none" stroke="#1a80c9" strokeWidth="1.800" />
        </svg>
      </button>
      <div className="h-11 w-[232px] rounded-[5px] border border-[#d6d6d6] bg-white pt-2 pl-2">
        <div className="grid h-[10px] w-[120px] grid-cols-4 border-2 border-[#444]">
          <span className="mb-[3px] bg-[#444]" />
          <span className="mt-[3px] bg-[#444]" />
          <span className="mb-[3px] bg-[#444]" />
          <span className="mt-[3px] bg-[#444]" />
        </div>
        <div className="flex w-[141px] justify-between text-[13px] leading-[18px] font-bold text-[#666]">
          <span>0</span>
          <span className="pl-2">1.5</span>
          <span>3km</span>
        </div>
      </div>
    </div>
    <p className="absolute right-10 bottom-[6px] h-[19px] bg-white/70 pr-1 pl-3 text-[15px] leading-[19px] text-[#5c5c5c]">
      © <a href="#osm" className="text-[#1a6fc4] underline">OpenStreetMap</a> contributors and Latitude Geographics Group Ltd
    </p>
    <span className="absolute bottom-0 left-[692px] flex h-4 w-8 items-center justify-center rounded-t-[4px] bg-[#e8e8e8]">
      <span className="h-2 w-5 border-y-2 border-[#8a8a8a] bg-[#b5b5b5]" />
    </span>
    <button aria-label="Map tools" className="absolute top-0 right-0 h-12 w-[33px] overflow-hidden rounded-bl-[5px] border-b border-l border-[#d6d6d6] bg-white pl-3">
      <svg viewBox="0 0 30 30" className="h-[30px] w-[30px]" fill="none" aria-hidden="true">
        <path d="M1 2L14 14" stroke="#9a9a9a" strokeWidth="1.500" />
        <path d="M15 14L28 28" stroke="#1a80c9" strokeWidth="6" />
        <path d="M9 21L20 9" stroke="#808080" strokeWidth="4" />
        <path d="M1 19Q6 15 9 19Q12 25 5 25M15 8Q14 1 22 1M19 8L22 9" stroke="#808080" strokeWidth="4" />
      </svg>
    </button>
    <button aria-label="Overview map" className="absolute right-0 bottom-[7px] flex h-11 w-[33px] items-center rounded-l-[5px] border-y border-l border-[#d6d6d6] bg-white pl-4">
      <svg viewBox="0 0 10 10" className="size-[10px]" aria-hidden="true">
        <path d="M0 0H9L6 3L10 7L7 10L3 6L0 9Z" fill="#858585" />
      </svg>
    </button>
  </div>
);

const ElevationChart = () => {
  const steps = [200, 180, 160, 140, 120, 100, 80, 60, 40, 20];
  return (
    <section className="flex-1 pt-[15px]">
      <h3 className="pr-[180px] pl-[196px] text-center text-[16px] leading-[18px] font-light text-[#6c6c70]">Profile</h3>
      <div className="mt-[26px] flex font-['Liberation_Sans',sans-serif]">
        <div className="flex w-11 shrink-0 items-center justify-center pb-2">
          <span className="-rotate-90 text-[20px] whitespace-nowrap text-[#a0ab87]">Elevation (m)</span>
        </div>
        <div className="-mt-2 w-[38px] shrink-0 pr-3 text-right text-[14px] leading-4 text-[#a0ab87]">
          <ul className="grid h-[312px] grid-rows-10">
            {steps.map((step) => (
              <li key={step} className="-ml-2 flex justify-end">
                <span>{step}</span>
              </li>
            ))}
          </ul>
        </div>
        <div className="min-w-0 flex-1">
          <div className="-ml-[5px] flex h-[312px]">
            <div className="flex w-[5px] flex-col justify-between border-r border-[#a0ab87]">
              {[...steps, 0].map((step) => (
                <span key={step} className="h-px bg-[#a0ab87]" />
              ))}
            </div>
            <svg viewBox={`0 0 ${PLOT_W} ${PLOT_H}`} preserveAspectRatio="none" className="h-[312px] min-w-0 flex-1" role="img" aria-label="Elevation profile">
              <path d={areaPath()} fill="#a0ab87" />
            </svg>
          </div>
          <div className="-ml-px flex h-[5px] justify-between border-t border-black">
            {Array.from({ length: 121 }, (_, i) => (
              <span key={i} className="h-full w-px bg-black" />
            ))}
          </div>
        </div>
        <div className="flex w-[116px] shrink-0 items-center pt-[69px] pl-[41px] text-[14px] text-black">
          <span className="mr-px size-[10px] bg-[#a0ab87]" />
          Elevation
        </div>
      </div>
    </section>
  );
};

const ChartsBar = () => (
  <div className="flex h-[49px] items-center border-b border-[#d4d4d4] pl-[10px]">
    <svg viewBox="0 0 30 30" className="size-[30px]" aria-hidden="true">
      <path d="M1.500 0V28.500H30" fill="none" stroke="#8a8a8a" strokeWidth="2.500" />
      <path d="M6 26V20M11 26V13M16 26V16M21 26V9M26 26V3" stroke="#1a80c9" strokeWidth="4" />
    </svg>
    <div className="relative ml-[13px] w-[314px]">
      <select aria-label="Select Charts" className="w-full appearance-none bg-transparent text-[15px] text-black outline-none">
        <option>Select Charts</option>
      </select>
      <svg viewBox="0 0 16 8" className="pointer-events-none absolute top-2 right-0 h-2 w-4" aria-hidden="true">
        <path d="M0 0H16L8 8Z" fill="#606060" />
      </svg>
    </div>
    <button aria-label="Collapse charts" className="mb-2 ml-auto">
      <svg viewBox="0 0 14 7" className="h-[7px] w-[14px]" aria-hidden="true">
        <path d="M0 7L7 0L14 7Z" fill="#858585" />
      </svg>
    </button>
    <button aria-label="Close charts" className="-mr-1 mb-1 ml-7 text-[#858585]">
      <X className="size-[18px]" strokeWidth={4} />
    </button>
  </div>
);

const App = () => (
  <div className="relative flex min-h-screen flex-col overflow-hidden bg-white font-['Open_Sans','Noto_Sans',sans-serif]">
    <BrowserChrome />
    <AppHeader />
    <Ribbon />
    <main className="flex flex-1 border-t border-[#d4d4d4]">
      <ProfilePanel />
      <div className="flex min-w-0 flex-1 flex-col">
        <MapView />
        <ChartsBar />
        <ElevationChart />
      </div>
    </main>
    <RedArrow className="top-[37px] left-[280px] h-24" />
    <RedArrow className="top-[283px] left-[782px] h-17" />
  </div>
);

export default App;
